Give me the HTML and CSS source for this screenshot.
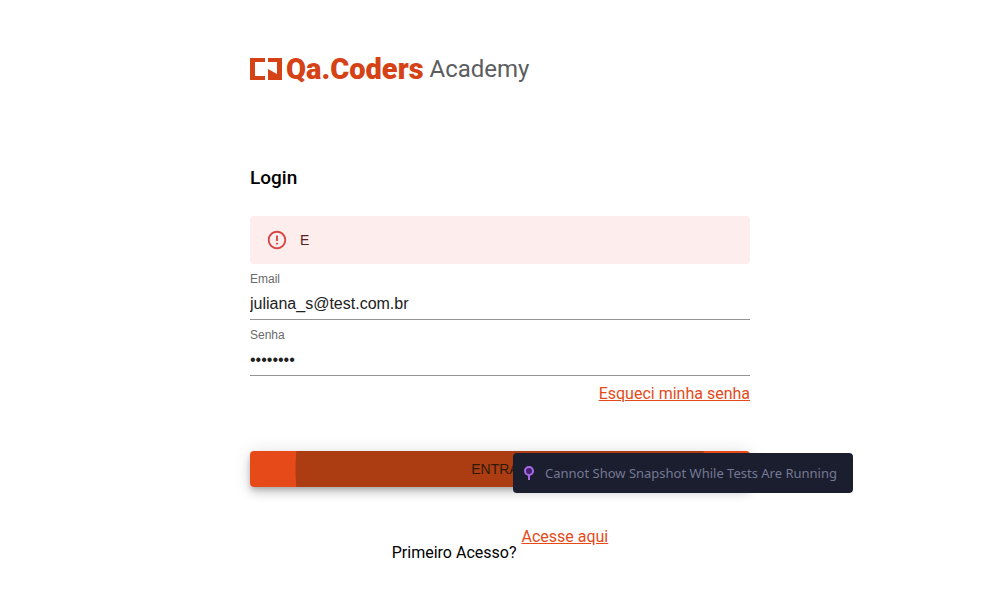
FILE: index.html
```html
<!DOCTYPE html>
<html lang="pt-BR">
<head>
<meta charset="utf-8">
<meta name="viewport" content="width=device-width, initial-scale=1">
<title>Login</title>
<link rel="stylesheet" href="styles.css">
</head>
<body>
<main class="page">
  <header class="brand">
    <svg class="brand-mark" viewBox="0 0 32 22" aria-hidden="true">
      <path d="M0 0H15V4H5V18H15V22H0ZM18 0H32V22H18V11L27 16V4H18Z"/>
    </svg>
    <span class="brand-name">Qa.Coders</span>
    <span class="brand-sub">Academy</span>
  </header>
  <h1 class="title">Login</h1>
  <form class="form">
    <div class="alert" role="alert">
      <svg class="alert-icon" viewBox="0 0 24 24" aria-hidden="true"><path d="M11 15h2v2h-2zm0-8h2v6h-2zm.990-5C6.470 2 2 6.480 2 12s4.470 10 9.990 10C17.520 22 22 17.520 22 12S17.520 2 11.990 2zM12 20c-4.420 0-8-3.580-8-8s3.580-8 8-8 8 3.580 8 8-3.580 8-8 8z"/></svg>
      <span>E</span>
    </div>
    <div class="field">
      <label for="email">Email</label>
      <input id="email" type="email" value="juliana_s@test.com.br">
    </div>
    <div class="field">
      <label for="senha">Senha</label>
      <input id="senha" type="password" value="12345678">
    </div>
    <a class="link forgot" href="#">Esqueci minha senha</a>
    <div class="submit-wrap">
      <button class="submit" type="button">ENTRAR</button>
      <div class="notice" role="status">
        <svg class="pin" viewBox="0 0 10 15" aria-hidden="true"><path d="M5 9V14"/><circle cx="5" cy="5" r="4"/></svg>
        <span>Cannot Show Snapshot While Tests Are Running</span>
      </div>
    </div>
  </form>
  <div class="signup">
    <p>Primeiro Acesso?</p>
    <a class="link" href="#">Acesse aqui</a>
  </div>
</main>
</body>
</html>
```
FILE: styles.css
```css
* { box-sizing: border-box; }
body {
  margin: 0;
  background: #fff;
  color: #000;
  font: 16px/24px Roboto, sans-serif;
}
.page {
  width: 50%;
  min-width: 320px;
  margin: 0 auto;
  padding-top: 52px;
}
.brand {
  display: flex;
  align-items: center;
  height: 34px;
  color: #d54215;
  white-space: nowrap;
}
.brand-mark { width: 32px; height: 22px; margin-right: 4px; fill: #d54215; }
.brand-name { font: 900 29px/34px Roboto, sans-serif; }
.brand-sub { margin-left: 6px; color: #5b5d5e; font: 400 24px/34px Roboto, sans-serif; }
.title {
  margin: 76px 0 0;
  font-size: 19px;
  line-height: 32px;
  font-weight: 500;
}
.form { margin-top: 22px; }
.alert {
  display: flex;
  align-items: center;
  gap: 12px;
  height: 48px;
  padding: 0 16px;
  border-radius: 4px;
  background: #fdeded;
  color: #5f2120;
  font: 14px/20px "Liberation Sans", Arial, sans-serif;
}
.alert-icon { width: 22px; height: 22px; fill: #d84343; }
.field { display: flex; flex-direction: column; height: 56px; padding-top: 6px; border-bottom: 1px solid #949494; }
.field label { color: #6b6b6b; font: 12px/18px "Liberation Sans", Arial, sans-serif; }
.field input {
  width: 100%;
  height: 32px;
  padding: 0;
  border: 0;
  outline: 0;
  background: none;
  color: #212121;
  font: 16px/24px "Liberation Sans", Arial, sans-serif;
}
.link { color: #e64a19; text-decoration: underline; }
.forgot { display: block; width: fit-content; margin: 6px 0 0 auto; }
.submit-wrap { position: relative; margin-top: 45px; }
.submit {
  display: block;
  width: 100%;
  height: 36px;
  padding: 0;
  border: 0;
  border-radius: 4px;
  background: radial-gradient(circle 205px at 50% 50%, #ac3d13 0 204px, #e64a19 205px);
  box-shadow: 0 3px 5px -1px rgba(0,0,0,.2), 0 6px 10px rgba(0,0,0,.14), 0 1px 18px rgba(0,0,0,.12);
  color: #2e1b07;
  font: 14px/24px "Liberation Sans", Arial, sans-serif;
}
.notice {
  position: absolute;
  top: 2px;
  left: 263px;
  display: flex;
  align-items: center;
  gap: 11px;
  width: 340px;
  height: 40px;
  padding: 0 0 0 11px;
  border-radius: 4px;
  background: #1b1e2e;
  color: #747994;
  font: 13px/20px "Noto Sans", sans-serif;
  white-space: nowrap;
}
.pin { width: 10px; height: 15px; fill: #44216f; stroke: #a76be8; stroke-width: 2; }
.signup { display: flex; justify-content: center; gap: 5px; margin-top: 38px; }
.signup p { margin: 16px 0 0; }
```
